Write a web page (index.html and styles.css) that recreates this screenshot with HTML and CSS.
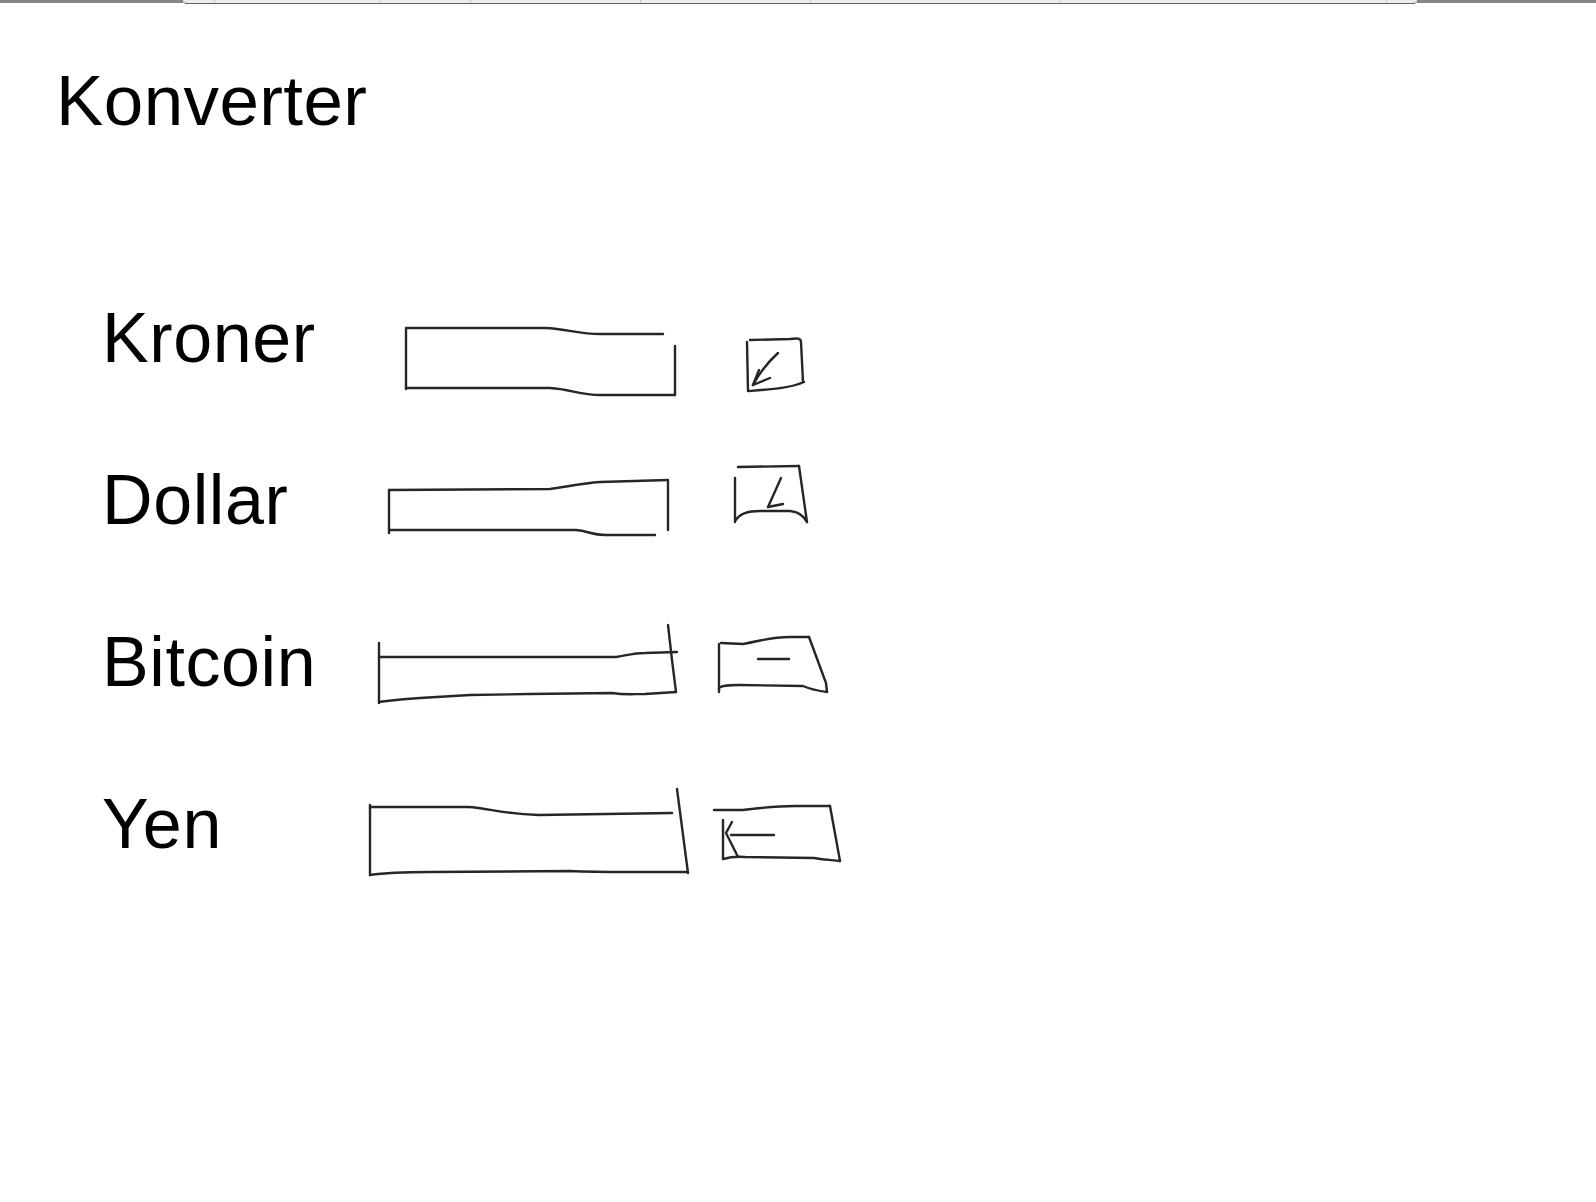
FILE: index.html
```html
<!DOCTYPE html>
<html>
<head>
<meta charset="utf-8">
<title>Konverter</title>
<link rel="stylesheet" href="styles.css">
</head>
<body>
<div class="topbar">
  <div class="tb-side tb-left"></div>
  <div class="tb-mid">
    <span class="tb-cell w32"></span>
    <span class="tb-cell w166"></span>
    <span class="tb-cell w90"></span>
    <span class="tb-cell w170"></span>
    <span class="tb-cell w170"></span>
    <span class="tb-cell w250"></span>
    <span class="tb-cell w326"></span>
    <span class="tb-cell last"></span>
  </div>
  <div class="tb-side tb-right"></div>
</div>
<main class="page">
  <h1 class="title">Konverter</h1>
  <div class="rows">
    <div class="row">
      <div class="label">Kroner</div>
      <svg class="sketch" width="490" height="100" viewBox="360 298 490 100">
        <path d="M406 329 L406 389"/>
        <path d="M406 328 L545 328 C568 329 578 334 600 334 L663 334"/>
        <path d="M675 346 L675 395"/>
        <path d="M406 388 L550 388 C570 389 580 395 600 395 L675 395"/>
        <path d="M748 391 L747 342"/>
        <path d="M750 340 L790 339 C797 338 801 338 801 342 L803 382"/>
        <path d="M804 382 C790 388 775 389 749 391"/>
        <path d="M778 353 C768 362 760 372 753 385"/>
        <path d="M753 385 L759 370"/>
        <path d="M753 385 L770 378"/>
      </svg>
    </div>
    <div class="row">
      <div class="label">Dollar</div>
      <svg class="sketch" width="490" height="100" viewBox="360 460 490 100">
        <path d="M389 490 L389 533"/>
        <path d="M389 490 L550 489 C570 486 585 483 600 482 L668 480"/>
        <path d="M668 481 L668 530"/>
        <path d="M389 530 L576 530 C588 531 592 535 605 535 L655 535"/>
        <path d="M735 478 L735 522"/>
        <path d="M738 467 L799 466"/>
        <path d="M799 466 L807 522"/>
        <path d="M736 520 C740 513 748 511 760 511 L790 511 C800 512 805 518 807 522"/>
        <path d="M781 478 L768 507"/>
        <path d="M768 507 L783 504"/>
      </svg>
    </div>
    <div class="row">
      <div class="label">Bitcoin</div>
      <svg class="sketch" width="490" height="100" viewBox="360 622 490 100">
        <path d="M379 643 L379 703"/>
        <path d="M379 657 L616 657 C628 655 635 653 645 653 L677 652"/>
        <path d="M668 625 L672 660 L676 692"/>
        <path d="M379 702 C395 700 400 699 420 698 L470 695 L530 694 L612 693 C625 695 632 694 645 694 L676 692"/>
        <path d="M719 644 L719 692"/>
        <path d="M721 643 L743 644 C760 641 770 637 790 637 L809 637"/>
        <path d="M809 637 L826 683 L827 692"/>
        <path d="M719 688 C722 685 730 685 740 685 L803 686 C812 690 820 691 827 692"/>
        <path d="M758 659 L789 659"/>
      </svg>
    </div>
    <div class="row">
      <div class="label">Yen</div>
      <svg class="sketch" width="490" height="100" viewBox="360 784 490 100">
        <path d="M370 805 L370 875"/>
        <path d="M370 807 L468 807 C490 808 500 814 539 815 L672 813"/>
        <path d="M677 789 L688 873"/>
        <path d="M370 875 C390 872 410 872 430 872 L570 871 C590 872 610 872 631 872 L688 872"/>
        <path d="M714 810 L743 810 C760 808 775 806 795 806 L830 806"/>
        <path d="M830 806 L840 861"/>
        <path d="M723 859 C730 857 735 856 745 857 L814 858 C825 860 832 860 840 861"/>
        <path d="M723 820 L723 859"/>
        <path d="M731 835 L774 835"/>
        <path d="M732 822 L726 833 L738 857"/>
      </svg>
    </div>
  </div>
</main>
</body>
</html>
```
FILE: styles.css
```css
html, body {
  margin: 0;
  padding: 0;
  background: #ffffff;
}
body {
  font-family: "Liberation Sans", Arial, Helvetica, sans-serif;
  color: #000;
  width: 1596px;
  height: 1202px;
  overflow: hidden;
}
.topbar {
  display: flex;
  height: 4px;
}
.tb-side {
  background: #878787;
  height: 3px;
}
.tb-left { width: 183px; }
.tb-right { flex: 1; }
.tb-mid {
  width: 1234px;
  display: flex;
  background: #ececec;
  border-bottom: 1px solid #5c6570;
  border-radius: 0 0 4px 4px;
  height: 3px;
}
.tb-cell {
  display: block;
  height: 100%;
  border-right: 1px solid #c4c4c4;
  box-sizing: border-box;
}
.tb-cell.last { border-right: none; flex: 1; }
.w32 { width: 32px; }
.w166 { width: 166px; }
.w90 { width: 90px; }
.w170 { width: 170px; }
.w250 { width: 250px; }
.w326 { width: 326px; }

.page {
  padding-left: 56px;
}
.title {
  margin: 57px 0 0 0;
  font-size: 71px;
  font-weight: normal;
  line-height: 80px;
  height: 80px;
  letter-spacing: 0.4px;
}
.rows {
  margin-top: 157px;
  padding-left: 46px;
  display: flex;
  flex-direction: column;
  gap: 62px;
}
.row {
  display: flex;
  align-items: flex-start;
  height: 100px;
}
.label {
  width: 258px;
  flex: none;
  font-size: 70px;
  line-height: 80px;
  letter-spacing: 0.6px;
}
.sketch {
  display: block;
  flex: none;
  overflow: visible;
}
.sketch path {
  fill: none;
  stroke: #262626;
  stroke-width: 2.4;
  stroke-linecap: round;
  stroke-linejoin: round;
}
```
